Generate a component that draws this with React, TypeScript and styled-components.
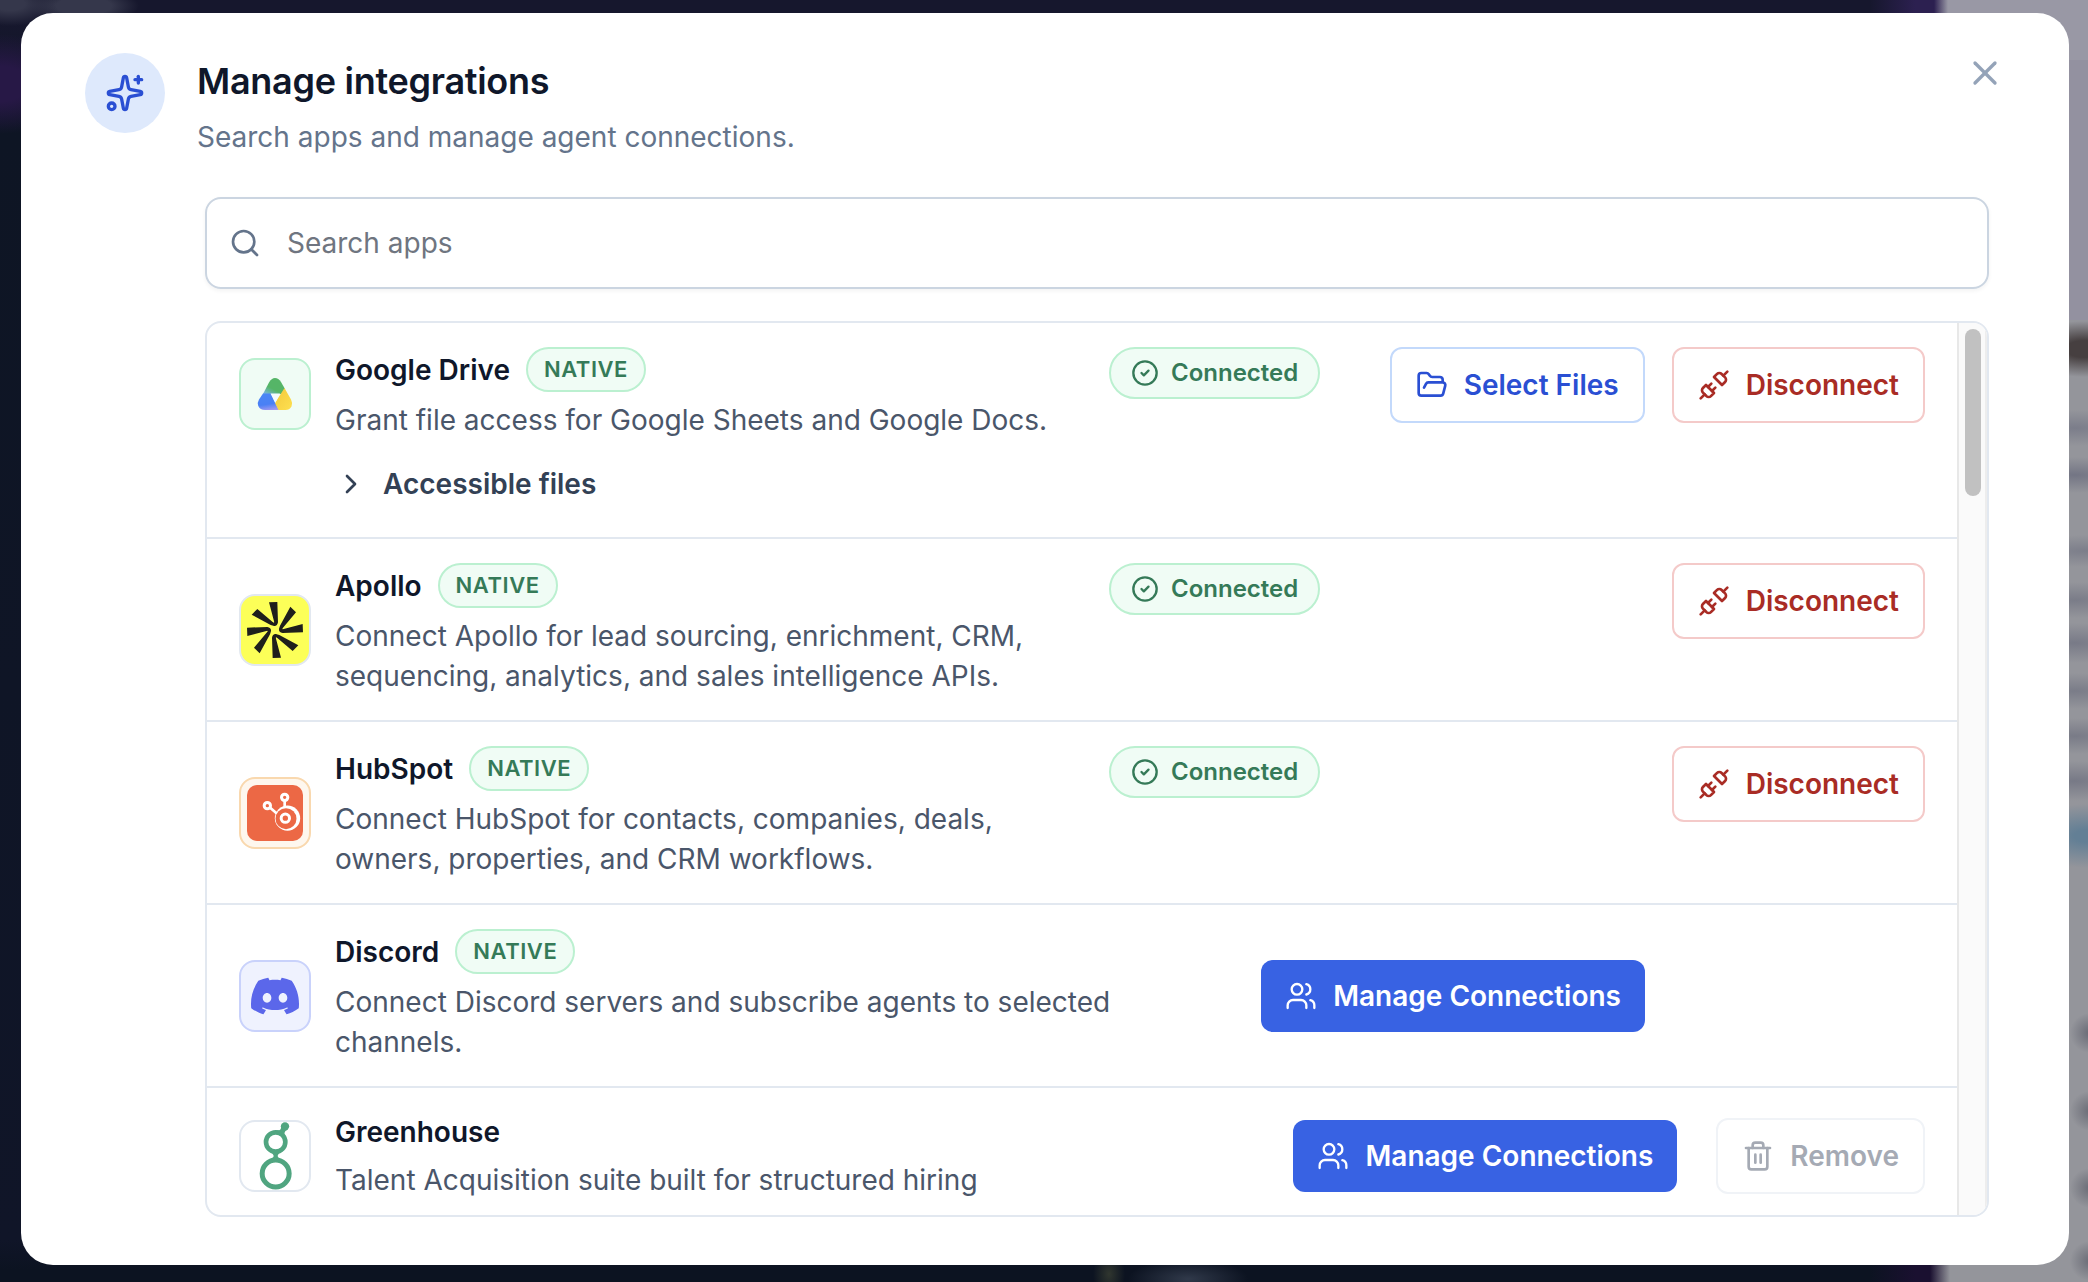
import React from "react";
import styled, { createGlobalStyle, css } from "styled-components";
import {
  ChevronRight,
  CircleCheck,
  FolderOpen,
  Search,
  Sparkles,
  Trash2,
  Unplug,
  Users,
  X,
} from "lucide-react";
import { SiDiscord } from "react-icons/si";

const GlobalStyle = createGlobalStyle`
  *, *::before, *::after { box-sizing: border-box; }
  html, body { margin: 0; padding: 0; }
  body {
    font-family: Inter, "Liberation Sans", sans-serif;
    font-size: 28px;
    line-height: 40px;
    color: #0f172a;
    overflow: hidden;
  }
  button { font: inherit; }
`;

/* Blurred page behind the dialog: dark sidebar area and a grey column on the right. */
const Backdrop = styled.div`
  width: 2088px;
  height: 1282px;
  padding: 13px 19px 17px 21px;
  overflow: hidden;
  background:
    radial-gradient(ellipse 50px 22px at 10px 4px, #35374b 30%, transparent),
    radial-gradient(ellipse 55px 18px at 84px 6px, #35374b 50%, transparent),
    radial-gradient(ellipse 80px 50px at 0 84px, #271846 35%, transparent),
    radial-gradient(ellipse 60px 28px at 2084px 349px, #463f40 30%, transparent),
    radial-gradient(ellipse 80px 18px at 2075px 428px, #7b7d8a, transparent),
    radial-gradient(ellipse 80px 18px at 2075px 475px, #737584, transparent),
    radial-gradient(ellipse 80px 16px at 2085px 551px, #7c7e8a, transparent),
    radial-gradient(ellipse 80px 18px at 2075px 600px, #7a7c88, transparent),
    radial-gradient(ellipse 80px 20px at 2075px 643px, #787a87, transparent),
    radial-gradient(ellipse 80px 18px at 2075px 691px, #7a7c88, transparent),
    radial-gradient(ellipse 80px 18px at 2075px 736px, #797b87, transparent),
    radial-gradient(ellipse 80px 20px at 2075px 781px, #777986, transparent),
    radial-gradient(ellipse 70px 32px at 2088px 836px, #637f95 20%, transparent),
    radial-gradient(ellipse 20px 20px at 2090px 1033px, #686a75, transparent),
    radial-gradient(ellipse 20px 20px at 2090px 1111px, #6a6c76, transparent),
    radial-gradient(ellipse 20px 20px at 2090px 1188px, #6a6c76, transparent),
    radial-gradient(ellipse 20px 20px at 2090px 1261px, #6a6c76, transparent),
    radial-gradient(ellipse 16px 24px at 1109px 1274px, #30362f, transparent),
    radial-gradient(ellipse 60px 20px at 1188px 1279px, #30394a, transparent),
    linear-gradient(90deg, transparent 1930px, #94959b 1950px) 0 320px / 100% 962px no-repeat,
    linear-gradient(90deg, transparent 1934px, #9998a5 1948px) 0 0 / 100% 60px no-repeat,
    linear-gradient(90deg, transparent 1934px, #9391a0 1948px) 0 60px / 100% 260px no-repeat,
    linear-gradient(90deg, transparent 1870px, #2c2050 1915px, #2c2050) 0 0 / 100% 30px no-repeat,
    linear-gradient(90deg, transparent 1870px, #1a1030 1915px, #1a1030) 0 1250px / 100% 32px
      no-repeat,
    linear-gradient(180deg, #16172d 0, #16172d 20px, #0e1524 130px, #101528 1240px, #0c1321 1270px);
`;

const Dialog = styled.section`
  width: 2048px;
  height: 1252px;
  padding: 40px 64px 48px;
  border-radius: 32px;
  background: #fff;
`;

const Header = styled.header`
  display: flex;
  align-items: flex-start;
`;

const HeaderIcon = styled.div`
  display: flex;
  align-items: center;
  justify-content: center;
  width: 80px;
  height: 80px;
  margin-right: 32px;
  border-radius: 50%;
  background: #dee9fc;
  color: #2a4fd3;
`;

const Heading = styled.div`
  flex: 1;
  padding-top: 4px;
`;

const Title = styled.h2`
  margin: 0 0 12px;
  font-size: 36px;
  line-height: 48px;
  font-weight: 600;
  letter-spacing: -0.28px;
`;

const Subtitle = styled.p`
  margin: 0;
  color: #64748b;
`;

const CloseButton = styled.button`
  display: flex;
  padding: 0;
  border: 0;
  background: none;
  color: #94a3b8;
`;

const Body = styled.div`
  display: flex;
  flex-direction: column;
  gap: 32px;
  margin: 40px 16px 0 120px;
`;

const SearchBox = styled.label`
  display: flex;
  align-items: center;
  gap: 26px;
  height: 92px;
  padding: 0 22px;
  border: 2px solid #cbd5e1;
  border-radius: 16px;
  box-shadow: 0 2px 4px rgba(0, 0, 0, 0.05);
  color: #64748b;
`;

const SearchInput = styled.input`
  flex: 1;
  padding: 0;
  border: 0;
  outline: 0;
  background: none;
  font: inherit;
  color: #0f172a;
  &::placeholder {
    color: #6f7580;
    opacity: 1;
  }
`;

const ListFrame = styled.div`
  display: flex;
  height: 896px;
  border: 2px solid #e2e8f0;
  border-radius: 16px;
  overflow: hidden;
`;

const List = styled.div`
  flex: 1;
  min-width: 0;
`;

const ScrollTrack = styled.div`
  width: 30px;
  padding: 6px;
  border-left: 2px solid #e8e8e8;
  border-right: 2px solid #ededed;
  background: #fafafa;
`;

const ScrollThumb = styled.div`
  width: 16px;
  height: 167px;
  border-radius: 8px;
  background: #c1c1c1;
`;

const Row = styled.article`
  padding: 24px 32px;
  border-bottom: 2px solid #e2e8f0;
`;

const RowMain = styled.div`
  display: flex;
  align-items: center;
`;

const AppIcon = styled.div<{ $bg: string; $border: string }>`
  display: flex;
  flex: none;
  align-items: center;
  justify-content: center;
  width: 72px;
  height: 72px;
  margin-right: 24px;
  border: 2px solid ${(p) => p.$border};
  border-radius: 16px;
  overflow: hidden;
  background: ${(p) => p.$bg};
`;

const Info = styled.div<{ $width: number }>`
  width: ${(p) => p.$width}px;
`;

const NameLine = styled.div`
  display: flex;
  align-items: center;
  gap: 16px;
  margin-bottom: 8px;
`;

const Name = styled.h3`
  margin: 0;
  font-size: 28px;
  font-weight: 600;
`;

const NativeBadge = styled.span`
  padding: 4px 16px;
  border: 2px solid #bbf0d0;
  border-radius: 23px;
  background: #f0fcf5;
  color: #357a58;
  font-size: 22px;
  line-height: 33px;
  font-weight: 600;
  letter-spacing: 0.55px;
`;

const Description = styled.p`
  margin: 0;
  color: #4a566a;
`;

const Status = styled.span`
  display: flex;
  align-self: flex-start;
  align-items: center;
  gap: 12px;
  margin-left: 24px;
  padding: 8px 20px;
  border: 2px solid #bbf0d0;
  border-radius: 26px;
  background: #f0fcf5;
  color: #357a58;
  font-size: 24px;
  line-height: 32px;
  font-weight: 600;
`;

const Actions = styled.div<{ $align: "flex-start" | "center"; $gap: number; $inset: number }>`
  display: flex;
  align-items: center;
  align-self: ${(p) => p.$align};
  gap: ${(p) => p.$gap}px;
  margin-left: auto;
  margin-right: ${(p) => p.$inset}px;
`;

type Tone = "blue" | "red" | "muted" | "primary";

const tones = {
  blue: css`
    border: 2px solid #c3d9fb;
    color: #2a4fd3;
  `,
  red: css`
    border: 2px solid #f4cac9;
    color: #a92c25;
  `,
  muted: css`
    border: 2px solid #f0f3f7;
    color: #a5aab4;
  `,
  primary: css`
    height: 72px;
    border: 0;
    background: #3862e3;
    color: #fff;
  `,
};

const Button = styled.button<{ $tone: Tone }>`
  display: flex;
  align-items: center;
  gap: 16px;
  height: 76px;
  padding: 0 24px;
  border-radius: 12px;
  background: #fff;
  font-weight: 600;
  white-space: nowrap;
  ${(p) => tones[p.$tone]}
`;

const Disclosure = styled.button`
  display: flex;
  align-items: center;
  gap: 16px;
  margin: 24px 0 9px 96px;
  padding: 0;
  border: 0;
  background: none;
  color: #334155;
  font-weight: 600;
`;

const DriveLogo = () => (
  <svg width="36" height="34" viewBox="0 0 36 34">
    <defs>
      <linearGradient id="drive-blue" x1="0.6" y1="0" x2="0.8" y2="1">
        <stop offset="0" stopColor="#4a86f5" />
        <stop offset="0.6" stopColor="#4a80f5" />
        <stop offset="1" stopColor="#a99bf0" />
      </linearGradient>
      <linearGradient id="drive-green" x1="0" y1="1" x2="0.5" y2="0.3">
        <stop offset="0" stopColor="#7db4ee" />
        <stop offset="0.6" stopColor="#55b567" />
      </linearGradient>
      <linearGradient id="drive-yellow" x1="0" y1="0" x2="1" y2="1">
        <stop offset="0" stopColor="#f3c83c" />
        <stop offset="1" stopColor="#fde050" />
      </linearGradient>
    </defs>
    <path d="M6 17 12 5.500Q14.500 1 18 1Q21.500 1 24 5L28 12 24.500 17Z" fill="url(#drive-green)" />
    <path d="M6 16.500H14L22 33H8Q3 33 1.300 29Q0 25.500 2 22.500Z" fill="url(#drive-blue)" />
    <path
      d="M27.500 11 34 22.500Q36 26 34.500 29.500Q32.500 33 28.500 33H21.500L18 26Z"
      fill="url(#drive-yellow)"
    />
    <path d="M13.500 16.500H23L18.200 26Z" fill="#f4fbff" />
  </svg>
);

const ApolloLogo = () => (
  <svg width="68" height="68" viewBox="48 48 204 204" fill="#1f1f1c">
    {[0, 90, 180, 270].map((angle) => (
      <path
        key={angle}
        transform={`rotate(${angle} 150 150)`}
        d="M80 104 97 87 143 126Q149 131 147 124L132 67 157 66 159 127Q157 139 147 138Q143 137 137 135Z"
      />
    ))}
  </svg>
);

const HubSpotLogo = () => (
  <svg width="68" height="68" viewBox="48 42 204 204">
    <rect x="66" y="60" width="168" height="168" rx="30" fill="#ec6845" />
    <path d="M133 126 158 148M179 104V130" stroke="#fff" strokeWidth="8" />
    <circle cx="187.5" cy="159.5" r="38" fill="#fff" />
    <circle cx="183" cy="161" r="31.5" fill="#ec6845" />
    <circle cx="127" cy="122" r="9.5" fill="#ec6845" stroke="#fff" strokeWidth="9" />
    <circle cx="179" cy="97" r="9.5" fill="#ec6845" stroke="#fff" strokeWidth="9" />
    <circle cx="181" cy="159.5" r="12.5" fill="none" stroke="#fff" strokeWidth="9" />
  </svg>
);

const GreenhouseLogo = () => (
  <svg width="68" height="68" viewBox="48 36 204 204" fill="none" stroke="#50a580">
    <circle cx="152" cy="96" r="29" strokeWidth="14" />
    <circle cx="152" cy="190.500" r="40.500" strokeWidth="15" />
    <path
      d="M130 122Q146 131 146 138Q146 144 124 156H180Q158 144 158 138Q158 131 174 122Z"
      fill="#50a580"
      stroke="none"
    />
    <path d="M150 60Q170 64 168 50L186 60Q176 64 179 78Z" fill="#50a580" stroke="none" />
    <circle cx="180" cy="49" r="12.500" fill="#50a580" stroke="none" />
  </svg>
);

const Connected = () => (
  <Status>
    <CircleCheck size={28} strokeWidth={2} />
    Connected
  </Status>
);

const Disconnect = () => (
  <Button $tone="red">
    <Unplug size={32} />
    Disconnect
  </Button>
);

const ManageConnections = () => (
  <Button $tone="primary">
    <Users size={32} strokeWidth={1.75} />
    Manage Connections
  </Button>
);

interface Integration {
  name: string;
  description: string;
  logo: React.ReactNode;
  bg: string;
  border: string;
  native?: boolean;
  connected?: boolean;
  infoWidth: number;
  inset?: number;
  gap?: number;
  actions: React.ReactNode;
  footer?: React.ReactNode;
}

const integrations: Integration[] = [
  {
    name: "Google Drive",
    description: "Grant file access for Google Sheets and Google Docs.",
    logo: <DriveLogo />,
    bg: "#f0fcf5",
    border: "#bbf0d0",
    native: true,
    connected: true,
    infoWidth: 750,
    gap: 27,
    actions: (
      <>
        <Button $tone="blue">
          <FolderOpen size={32} />
          Select Files
        </Button>
        <Disconnect />
      </>
    ),
    footer: (
      <Disclosure>
        <ChevronRight size={32} />
        Accessible files
      </Disclosure>
    ),
  },
  {
    name: "Apollo",
    description:
      "Connect Apollo for lead sourcing, enrichment, CRM, sequencing, analytics, and sales intelligence APIs.",
    logo: <ApolloLogo />,
    bg: "#fcff58",
    border: "#e2e8f0",
    native: true,
    connected: true,
    infoWidth: 750,
    actions: <Disconnect />,
  },
  {
    name: "HubSpot",
    description:
      "Connect HubSpot for contacts, companies, deals, owners, properties, and CRM workflows.",
    logo: <HubSpotLogo />,
    bg: "#fef7ee",
    border: "#f9d8ae",
    native: true,
    connected: true,
    infoWidth: 750,
    actions: <Disconnect />,
  },
  {
    name: "Discord",
    description: "Connect Discord servers and subscribe agents to selected channels.",
    logo: <SiDiscord size={48} color="#5b67ea" />,
    bg: "#eff2fe",
    border: "#c9d2fb",
    native: true,
    infoWidth: 820,
    inset: 280,
    actions: <ManageConnections />,
  },
  {
    name: "Greenhouse",
    description: "Talent Acquisition suite built for structured hiring",
    logo: <GreenhouseLogo />,
    bg: "#fff",
    border: "#e2e8f0",
    infoWidth: 820,
    gap: 39,
    actions: (
      <>
        <ManageConnections />
        <Button $tone="muted" disabled>
          <Trash2 size={32} />
          Remove
        </Button>
      </>
    ),
  },
];

const IntegrationRow = ({ item }: { item: Integration }) => (
  <Row>
    <RowMain>
      <AppIcon $bg={item.bg} $border={item.border}>
        {item.logo}
      </AppIcon>
      <Info $width={item.infoWidth}>
        <NameLine>
          <Name>{item.name}</Name>
          {item.native && <NativeBadge>NATIVE</NativeBadge>}
        </NameLine>
        <Description>{item.description}</Description>
      </Info>
      {item.connected && <Connected />}
      <Actions
        $align={item.connected ? "flex-start" : "center"}
        $gap={item.gap ?? 28}
        $inset={item.inset ?? 0}
      >
        {item.actions}
      </Actions>
    </RowMain>
    {item.footer}
  </Row>
);

export default function App() {
  return (
    <>
      <GlobalStyle />
      <Backdrop>
        <Dialog>
          <Header>
            <HeaderIcon>
              <Sparkles size={40} />
            </HeaderIcon>
            <Heading>
              <Title>Manage integrations</Title>
              <Subtitle>Search apps and manage agent connections.</Subtitle>
            </Heading>
            <CloseButton aria-label="Close">
              <X size={40} />
            </CloseButton>
          </Header>
          <Body>
            <SearchBox>
              <Search size={32} />
              <SearchInput placeholder="Search apps" />
            </SearchBox>
            <ListFrame>
              <List>
                {integrations.map((item) => (
                  <IntegrationRow key={item.name} item={item} />
                ))}
              </List>
              <ScrollTrack>
                <ScrollThumb />
              </ScrollTrack>
            </ListFrame>
          </Body>
        </Dialog>
      </Backdrop>
    </>
  );
}
